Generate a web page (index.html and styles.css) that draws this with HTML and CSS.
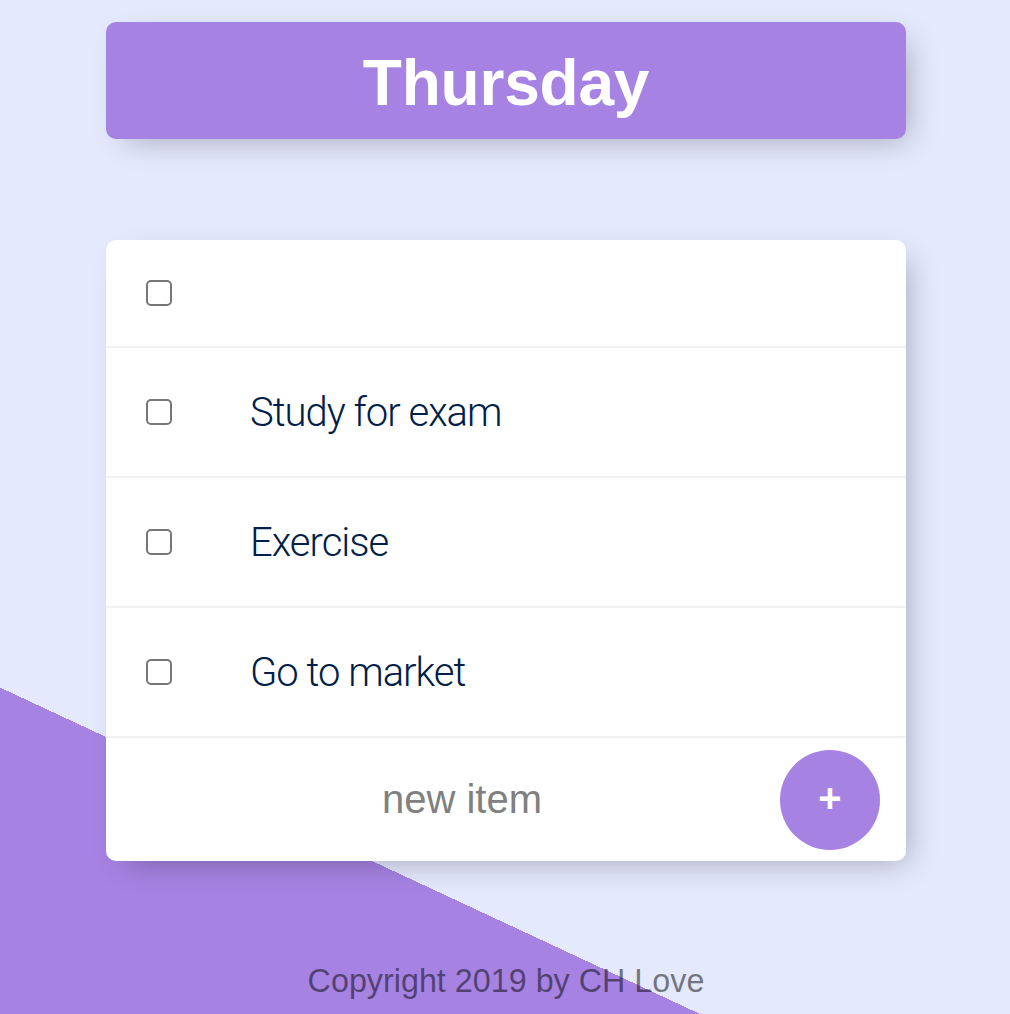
FILE: index.html
```html
<!DOCTYPE html>
<html lang="en">
<head>
<meta charset="utf-8">
<title>To-Do List</title>
<link rel="stylesheet" href="styles.css">
</head>
<body>
  <div class="box heading">
    <h1 class="title">Thursday</h1>
  </div>

  <div class="box list">
    <div class="item">
      <input class="check" type="checkbox">
      <p class="text"></p>
    </div>
    <div class="item">
      <input class="check" type="checkbox">
      <p class="text">Study for exam</p>
    </div>
    <div class="item">
      <input class="check" type="checkbox">
      <p class="text">Exercise</p>
    </div>
    <div class="item">
      <input class="check" type="checkbox">
      <p class="text">Go to market</p>
    </div>
    <form class="item new-form">
      <input class="new-input" type="text" placeholder="new item">
      <button class="add-btn" type="button">+</button>
    </form>
  </div>

  <footer class="footer">Copyright 2019 by CH Love</footer>
</body>
</html>
```

FILE: styles.css
```css
html {
  background-color: #E4E9FD;
  background-image: linear-gradient(25deg, #A683E3 50%, #E4E9FD 50%);
  background-size: 1010px 1846px;
  background-repeat: no-repeat;
  min-height: 100%;
}

body {
  margin: 0;
  padding: 22px 0 0 2px;
  font-family: "Liberation Sans", Arial, sans-serif;
}

.box {
  width: 800px;
  margin: 0 auto;
  border-radius: 10px;
  box-shadow: 10px 10px 30px -10px rgba(0, 0, 0, 0.3);
}

.heading {
  background-color: #A683E3;
  height: 117px;
  display: flex;
  align-items: center;
  justify-content: center;
}

.title {
  margin: 0;
  padding-top: 4px;
  color: #fff;
  font-size: 64px;
  font-weight: 700;
  line-height: normal;
  letter-spacing: -0.2px;
}

.list {
  margin-top: 101px;
  background: #fff;
}

.item {
  display: flex;
  align-items: center;
  border-bottom: 2px solid #F1F1F1;
}

.item:last-child {
  border-bottom: 0;
}

.check {
  appearance: none;
  -webkit-appearance: none;
  flex: none;
  width: 26px;
  height: 26px;
  margin: 40px;
  border: 2px solid #767676;
  border-radius: 5px;
  background: #fff;
}

.text {
  margin: 0;
  padding: 41px 40px 39px 38px;
  font-family: "Roboto", "Liberation Sans", sans-serif;
  font-size: 40px;
  font-weight: 300;
  line-height: 48px;
  color: #00204a;
  letter-spacing: -1px;
}

.text:empty {
  display: none;
}

.new-form {
  height: 123px;
  padding-left: 46px;
  padding-right: 26px;
  justify-content: space-between;
}

.new-input {
  width: 620px;
  height: 120px;
  padding: 0;
  border: none;
  background: transparent;
  outline: none;
  text-align: center;
  font-family: "Liberation Sans", Arial, sans-serif;
  font-size: 40px;
  color: #808080;
}

.new-input::placeholder {
  color: #808080;
  opacity: 1;
}

.add-btn {
  flex: none;
  width: 100px;
  height: 100px;
  border: 0;
  border-radius: 50%;
  background-color: #A683E3;
  color: #fff;
  font-family: "Liberation Sans", Arial, sans-serif;
  font-size: 40px;
  font-weight: 700;
  line-height: 1;
  padding: 0 0 4px 0;
  margin-top: 1px;
}

.footer {
  margin-top: 102px;
  text-align: center;
  font-size: 32.3px;
  color: rgba(0, 0, 0, 0.5);
}
```
